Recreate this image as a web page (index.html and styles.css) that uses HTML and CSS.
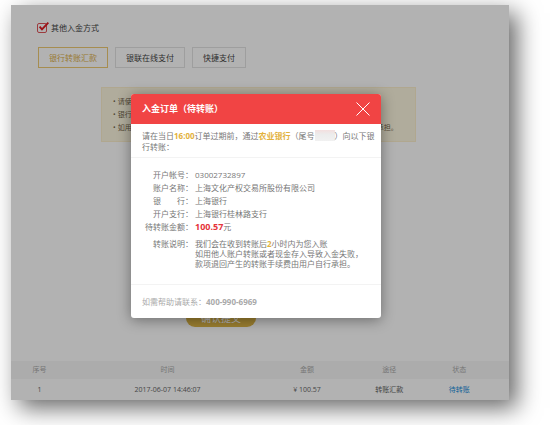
FILE: index.html
```html
<!DOCTYPE html>
<html lang="zh-CN">
<head>
    <meta charset="utf-8">
    <meta name="viewport" content="width=device-width, initial-scale=1">
    <title>入金订单</title>
    <link rel="stylesheet" href="styles.css">
</head>
<body>
    <div class="page">
        <main>
            <label class="pay-other">
                <span class="check">
                    <input type="checkbox" checked>
                    <svg viewBox="0 0 12 11" width="12" height="11"><path d="M2.6 4.6 L5 7.4 L11.4 0.6" fill="none" stroke="currentColor" stroke-width="1.9"/></svg>
                </span>
                其他入金方式
            </label>
            <div class="pay-tabs">
                <button class="tab active">银行转账汇款</button>
                <button class="tab">银联在线支付</button>
                <button class="tab">快捷支付</button>
            </div>
            <ul class="notice">
                <li>请使</li>
                <li>银行</li>
                <li>如用他人账户转账或现金存入导致入金失败，款项退回产生的转账手续费由用户自行承担。</li>
            </ul>
            <button class="submit">确认提交</button>
            <table class="orders">
                <thead>
                    <tr>
                        <th class="col-no">序号</th>
                        <th class="col-time">时间</th>
                        <th class="col-amount">金额</th>
                        <th class="col-way">途径</th>
                        <th class="col-status">状态</th>
                    </tr>
                </thead>
                <tbody>
                    <tr>
                        <td>1</td>
                        <td>2017-06-07 14:46:07</td>
                        <td>¥ 100.57</td>
                        <td>转账汇款</td>
                        <td class="col-status"><a href="#">待转账</a></td>
                    </tr>
                </tbody>
            </table>
        </main>

        <div class="overlay">
            <div class="modal" role="dialog" aria-labelledby="modal-title">
                <div class="modal-header">
                    <h2 id="modal-title">入金订单（待转账）</h2>
                    <button class="close" aria-label="关闭">
                        <svg viewBox="0 0 14 14" width="14" height="14"><path d="M0.5 0.5 L13.5 13.5 M13.5 0.5 L0.5 13.5" fill="none" stroke="currentColor"/></svg>
                    </button>
                </div>
                <p class="modal-tip">请在当日<b>16:00</b>订单过期前，通过<b>农业银行</b>（尾号<span class="masked"></span>）向以下银行转账：</p>
                <dl class="account">
                    <dt>开户帐号：</dt>
                    <dd>03002732897</dd>
                    <dt>账户名称：</dt>
                    <dd>上海文化产权交易所股份有限公司</dd>
                    <dt>银　　行：</dt>
                    <dd>上海银行</dd>
                    <dt>开户支行：</dt>
                    <dd>上海银行桂林路支行</dd>
                    <dt>待转账金额：</dt>
                    <dd><strong class="amount">100.57</strong>元</dd>
                    <dt class="remark">转账说明：</dt>
                    <dd class="remark">我们会在收到转账后<b>2</b>小时内为您入账<br>如用他人账户转账或者现金存入导致入金失败，<br>款项退回产生的转账手续费由用户自行承担。</dd>
                </dl>
                <div class="modal-footer">如需帮助请联系：<strong>400-990-6969</strong></div>
            </div>
        </div>
    </div>
</body>
</html>
```

FILE: styles.css
```css
/* Base styles */
* {
    box-sizing: border-box;
}
body {
    margin: 0;
    padding: 5px 41px 25px 11px;
    background-color: #fff;
    color: #666;
    font-family: "Open Sans", "Noto Sans CJK SC", sans-serif;
    font-size: 8px;
}
button {
    font-family: inherit;
    padding: 0;
    cursor: pointer;
}
.page {
    position: relative;
    background-color: #fff;
    box-shadow: 8px 8px 22px rgba(0, 0, 0, 0.6);
}
main {
    display: flex;
    flex-direction: column;
    padding-top: 16px;
}

/* Payment methods */
.pay-other {
    display: flex;
    align-items: center;
    gap: 2px;
    height: 12px;
    margin-left: 26px;
    color: #444;
}
.check {
    position: relative;
    width: 12px;
    height: 11px;
}
.check input {
    appearance: none;
    display: block;
    width: 10px;
    height: 10px;
    margin: 1px 0 0;
    border: 1px solid #e0555a;
    border-radius: 2px;
}
.check svg {
    position: absolute;
    top: 0;
    left: 0;
    color: #e01b22;
}
.pay-tabs {
    display: flex;
    gap: 7px;
    margin: 14px 0 0 27px;
}
.tab {
    height: 21px;
    padding: 0 10px;
    border: 1px solid #e3e3e3;
    background-color: transparent;
    color: #444;
    font-size: 8px;
}
.tab.active {
    border-color: #eecb73;
    color: #dcb04b;
}
.notice {
    margin: 19px 93px 0 90px;
    padding: 7px 11px;
    border: 1px solid #fdf0cd;
    background-color: #fcf7e0;
    color: #75664c;
    font-size: 7px;
    line-height: 13px;
    list-style: none;
}
.notice li::before {
    content: "•";
    margin-right: 2px;
}
.submit {
    align-self: flex-start;
    width: 70px;
    height: 18px;
    margin: 167px 0 34px 175px;
    border: 0;
    border-radius: 9px;
    background-color: #dfb745;
    color: #fff;
    font-size: 10px;
    line-height: 18px;
}

/* Order list */
.orders {
    width: 100%;
    border-collapse: collapse;
    table-layout: fixed;
    font-size: 7px;
    line-height: 10px;
    text-align: center;
}
.orders th {
    height: 18px;
    padding: 0;
    background-color: #f7f7f7;
    color: #aaa;
    font-weight: normal;
}
.orders td {
    height: 21px;
    padding: 0;
}
.orders a {
    color: #1d8fdb;
    text-decoration: none;
}
.orders .col-no { width: 57px; }
.orders .col-time { width: 40%; }
.orders .col-amount { width: 16%; }
.orders .col-way { width: 17%; }
.orders .col-status { padding-right: 22px; }

/* Modal */
.overlay {
    position: absolute;
    top: 0;
    right: 0;
    bottom: 0;
    left: 0;
    display: flex;
    justify-content: center;
    align-items: flex-start;
    padding: 89px 8px 0 0;
    background-color: rgba(0, 0, 0, 0.3);
}
.modal {
    width: 250px;
    border-radius: 3px;
    background-color: #fff;
    color: #777;
    box-shadow: 0 2px 14px rgba(0, 0, 0, 0.4);
    overflow: hidden;
}
.modal-header {
    display: flex;
    justify-content: space-between;
    align-items: center;
    height: 30px;
    padding: 0 11px;
    background-color: #f14444;
    color: #fff;
}
.modal-header h2 {
    margin: 0;
    font-size: 9px;
    line-height: 12px;
}
.close {
    display: flex;
    border: 0;
    background: none;
    color: #fff;
}
.modal b {
    color: #e3b23c;
}
.modal-tip {
    margin: 0;
    padding: 6px 3px 5px 11px;
    border-bottom: 1px solid #f3f3f3;
    line-height: 11px;
}
.masked {
    display: inline-block;
    width: 20px;
    height: 11px;
    vertical-align: top;
    background: linear-gradient(#f3dfdf, #ececec 40%, #f1f1f1);
}
.account {
    display: grid;
    grid-template-columns: 62px 1fr;
    column-gap: 2px;
    row-gap: 3px;
    margin: 0;
    padding: 12px 0 15px;
    border-bottom: 1px solid #f3f3f3;
    line-height: 10px;
}
.account dt {
    text-align: right;
}
.account dd {
    margin: 0;
}
.account .remark {
    margin-top: 4px;
}
.account .amount {
    color: #e5333a;
    font-size: 9px;
}
.modal-footer {
    padding: 11px;
    color: #aaa;
    line-height: 11px;
}
```
